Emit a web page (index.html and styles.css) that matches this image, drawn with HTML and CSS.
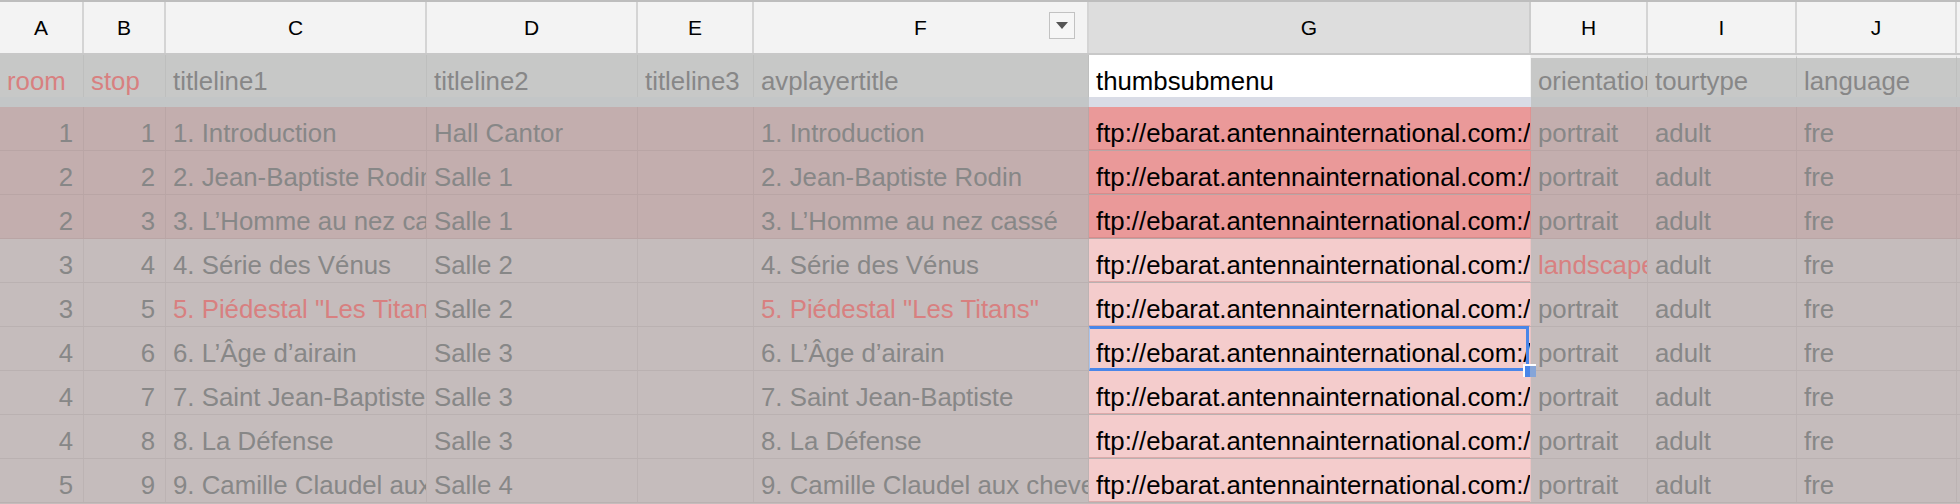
FILE: index.html
```html
<!DOCTYPE html>
<html>
<head>
<meta charset="utf-8">
<link rel="stylesheet" href="styles.css">
</head>
<body>
<div class="sheet">
  <div class="row colhead">
    <div class="ch">A</div>
    <div class="ch">B</div>
    <div class="ch">C</div>
    <div class="ch">D</div>
    <div class="ch">E</div>
    <div class="ch ch-f"><span>F</span><span class="dd"><svg width="12" height="7" viewBox="0 0 12 7"><path d="M0 0H12L6 7Z" fill="#555"/></svg></span></div>
    <div class="ch ch-sel">G</div>
    <div class="ch">H</div>
    <div class="ch">I</div>
    <div class="ch">J</div>
    <div class="ch ch-last"></div>
  </div>

  <div class="row hdr">
    <div class="c red">room</div>
    <div class="c red">stop</div>
    <div class="c">titleline1</div>
    <div class="c">titleline2</div>
    <div class="c">titleline3</div>
    <div class="c">avplayertitle</div>
    <div class="c g">thumbsubmenu</div>
    <div class="c r">orientation</div>
    <div class="c r">tourtype</div>
    <div class="c r">language</div>
    <div class="c r"></div>
  </div>

  <div class="row frozen">
    <div class="f"></div><div class="f"></div><div class="f"></div><div class="f"></div><div class="f"></div><div class="f"></div>
    <div class="f g"></div>
    <div class="f"></div><div class="f"></div><div class="f"></div><div class="f"></div>
  </div>

  <div class="row data dark">
    <div class="c num">1</div><div class="c num">1</div>
    <div class="c">1. Introduction</div><div class="c">Hall Cantor</div><div class="c"></div>
    <div class="c">1. Introduction</div>
    <div class="c g">ftp://ebarat.antennainternational.com://</div>
    <div class="c">portrait</div><div class="c">adult</div><div class="c">fre</div><div class="c"></div>
  </div>
  <div class="row data dark">
    <div class="c num">2</div><div class="c num">2</div>
    <div class="c">2. Jean-Baptiste Rodin</div><div class="c">Salle 1</div><div class="c"></div>
    <div class="c">2. Jean-Baptiste Rodin</div>
    <div class="c g">ftp://ebarat.antennainternational.com://</div>
    <div class="c">portrait</div><div class="c">adult</div><div class="c">fre</div><div class="c"></div>
  </div>
  <div class="row data dark">
    <div class="c num">2</div><div class="c num">3</div>
    <div class="c">3. L’Homme au nez cassé</div><div class="c">Salle 1</div><div class="c"></div>
    <div class="c">3. L’Homme au nez cassé</div>
    <div class="c g">ftp://ebarat.antennainternational.com://</div>
    <div class="c">portrait</div><div class="c">adult</div><div class="c">fre</div><div class="c"></div>
  </div>
  <div class="row data">
    <div class="c num">3</div><div class="c num">4</div>
    <div class="c">4. Série des Vénus</div><div class="c">Salle 2</div><div class="c"></div>
    <div class="c">4. Série des Vénus</div>
    <div class="c g">ftp://ebarat.antennainternational.com://</div>
    <div class="c red">landscape</div><div class="c">adult</div><div class="c">fre</div><div class="c"></div>
  </div>
  <div class="row data">
    <div class="c num">3</div><div class="c num">5</div>
    <div class="c red">5. Piédestal "Les Titans"</div><div class="c">Salle 2</div><div class="c"></div>
    <div class="c red">5. Piédestal "Les Titans"</div>
    <div class="c g">ftp://ebarat.antennainternational.com://</div>
    <div class="c">portrait</div><div class="c">adult</div><div class="c">fre</div><div class="c"></div>
  </div>
  <div class="row data">
    <div class="c num">4</div><div class="c num">6</div>
    <div class="c">6. L’Âge d’airain</div><div class="c">Salle 3</div><div class="c"></div>
    <div class="c">6. L’Âge d’airain</div>
    <div class="c g sel"><span class="clip">ftp://ebarat.antennainternational.com://</span><span class="handle"></span></div>
    <div class="c">portrait</div><div class="c">adult</div><div class="c">fre</div><div class="c"></div>
  </div>
  <div class="row data">
    <div class="c num">4</div><div class="c num">7</div>
    <div class="c">7. Saint Jean-Baptiste</div><div class="c">Salle 3</div><div class="c"></div>
    <div class="c">7. Saint Jean-Baptiste</div>
    <div class="c g">ftp://ebarat.antennainternational.com://</div>
    <div class="c">portrait</div><div class="c">adult</div><div class="c">fre</div><div class="c"></div>
  </div>
  <div class="row data">
    <div class="c num">4</div><div class="c num">8</div>
    <div class="c">8. La Défense</div><div class="c">Salle 3</div><div class="c"></div>
    <div class="c">8. La Défense</div>
    <div class="c g">ftp://ebarat.antennainternational.com://</div>
    <div class="c">portrait</div><div class="c">adult</div><div class="c">fre</div><div class="c"></div>
  </div>
  <div class="row data">
    <div class="c num">5</div><div class="c num">9</div>
    <div class="c">9. Camille Claudel aux cheveux courts</div><div class="c">Salle 4</div><div class="c"></div>
    <div class="c">9. Camille Claudel aux cheveux courts</div>
    <div class="c g">ftp://ebarat.antennainternational.com://</div>
    <div class="c">portrait</div><div class="c">adult</div><div class="c">fre</div><div class="c"></div>
  </div>
</div>
</body>
</html>
```

FILE: styles.css
```css
* { box-sizing: border-box; }
html, body { margin: 0; padding: 0; background: #c5bcbc; }
body { width: 1960px; height: 504px; overflow: hidden; font-family: "Liberation Sans", Arial, sans-serif; }

.sheet { border-top: 2px solid #bdbdbd; }

.row {
  display: grid;
  grid-template-columns: 84px 82px 261px 211px 116px 335px 442px 117px 149px 160px 1fr;
}

/* column letter header */
.colhead { height: 53px; background: #f3f3f3; border-bottom: 2px solid #c8c8c8; }
.ch {
  display: flex; align-items: center; justify-content: center;
  font-size: 21px; color: #000;
  border-right: 2px solid #d4d4d4;
}
.ch-last { border-right: none; }
.ch-sel { background: #dddddd; border-right-color: #cccccc; }
.ch-f { position: relative; }
.dd {
  position: absolute; right: 12px; top: 10px;
  width: 26px; height: 27px;
  border: 1px solid #c2c2c2; background: #f6f6f6;
  display: flex; align-items: center; justify-content: center;
}

/* cells */
.c {
  font-size: 25.8px;
  white-space: nowrap; overflow: hidden;
  padding: 0 7px;
  color: #878787;
  border-right: 1px solid rgba(0,0,0,0.045);
}
.c.num { text-align: right; padding-right: 10px; }
.c.red { color: #d88080; }

/* header data row */
.hdr { height: 42px; background: #c7c8c7; }
.hdr .c { padding-top: 11px; line-height: 31px; }
.hdr .c.r { border-top: 3px solid #eeeeee; padding-top: 8px; }
.hdr .c.g { background: #ffffff; color: #000; }

/* frozen divider */
.frozen { height: 10px; background: #c3c6c7; }
.frozen .g { background: #d9dce6; }

/* data rows */
.data { height: 44px; background: #c5bcbc; border-bottom: 1px solid #bab1b1; }
.data.dark { background: #c3aeae; border-bottom-color: #b9a5a5; }
.data .c { padding-top: 10px; line-height: 33px; }
.data .c.g { background: #f4cccc; color: #000; box-shadow: inset 0 -1px 0 #dcaaaa; }
.data.dark .c.g { background: #ea9999; box-shadow: inset 0 -1px 0 #d88b8b; }

/* selection */
.sel { position: relative; overflow: visible; padding-right: 0; }
.clip { display: block; overflow: hidden; white-space: nowrap; }
.sel::before {
  content: ""; position: absolute; left: 0; top: -1px; right: 1px; bottom: -1px;
  border: 3px solid #4a86e8; border-left: 1px solid #a9c4ee;
  pointer-events: none;
}
.handle {
  position: absolute; right: -6px; bottom: -7px;
  width: 13px; height: 13px;
  background: linear-gradient(to right, #4a86e8 0, #4a86e8 5px, #86a5d8 5px);
  border-left: 2px solid #fff; border-top: 2px solid #fff;
  z-index: 2;
}
```
